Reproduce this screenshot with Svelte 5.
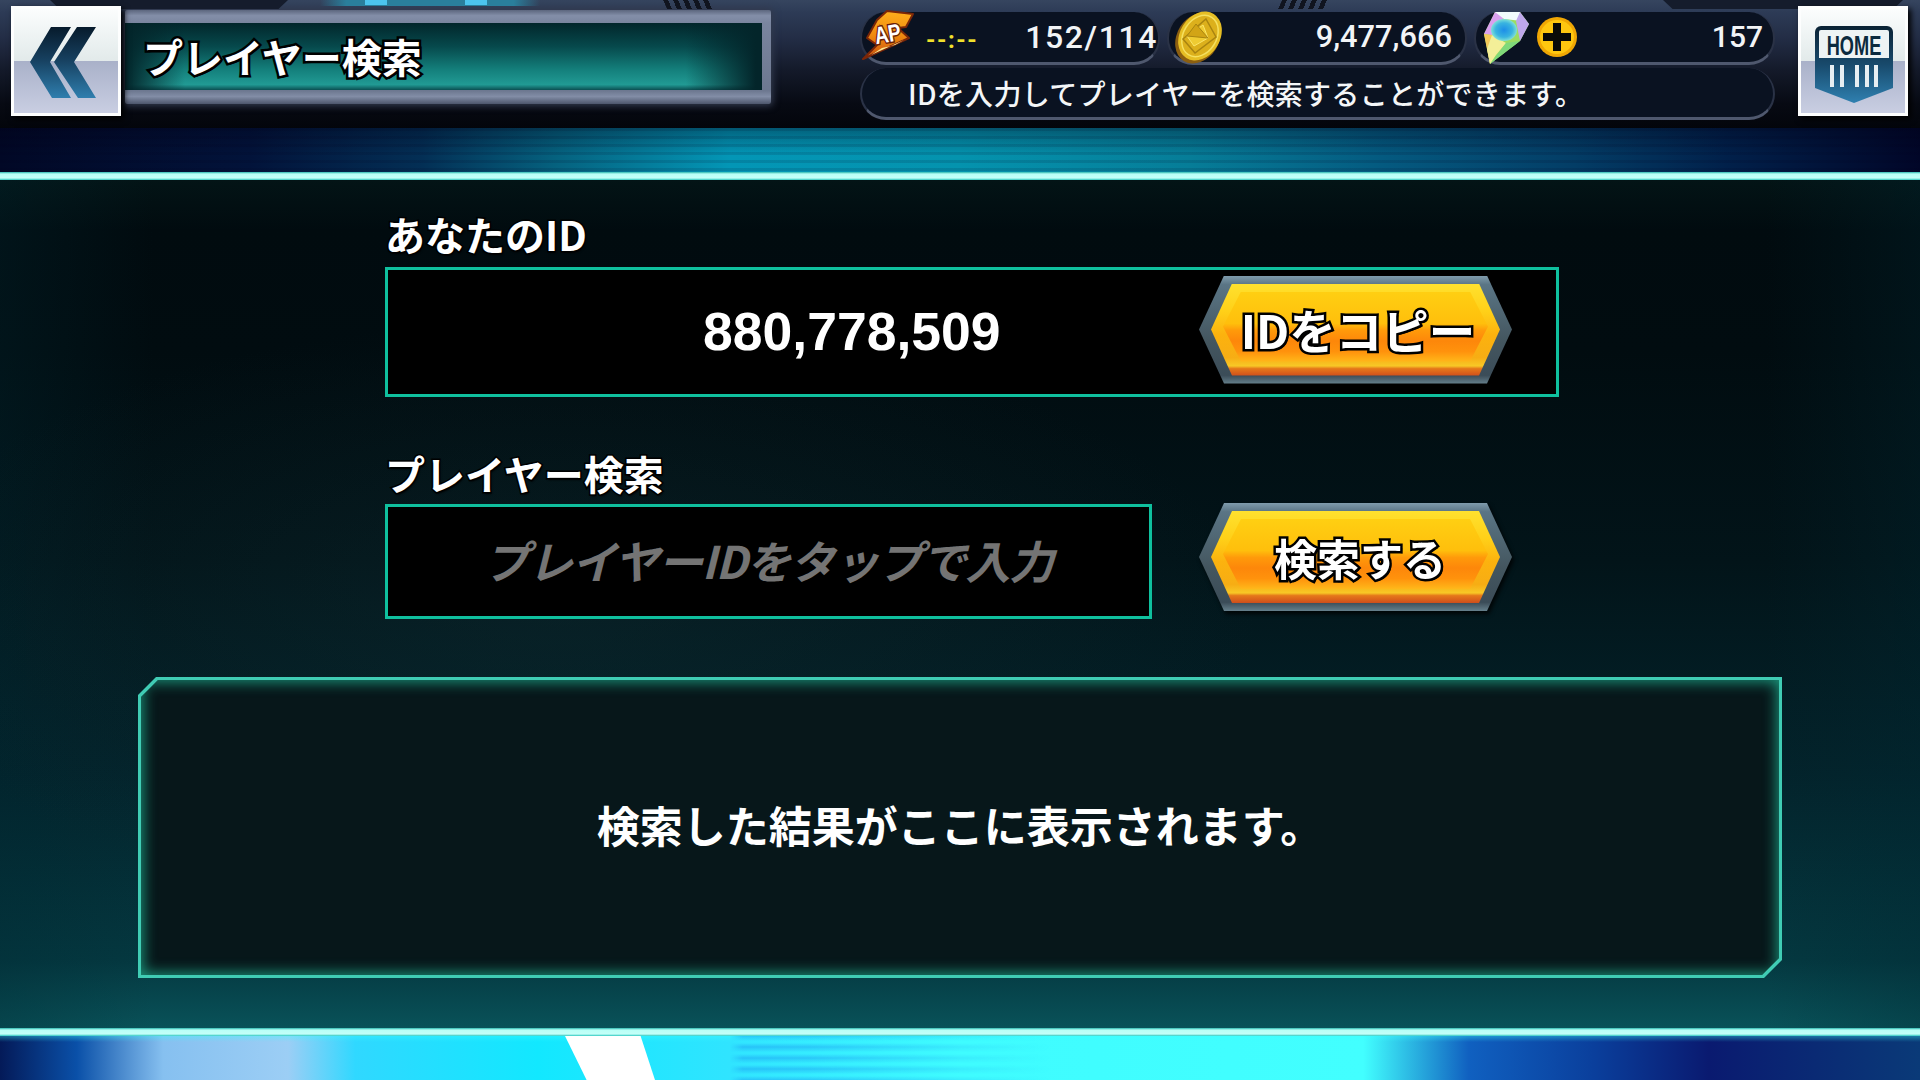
<script>
	const copyLabel = 'IDをコピー';
	const searchLabel = '検索する';
</script>

<div class="screen">
	<header class="header">
		<span class="deco tab-left"></span>
		<span class="deco lights"><i></i><i></i></span>
		<span class="deco stripes s1"></span>
		<span class="deco stripes s2"></span>
		<span class="deco tab-right"></span>

		<button class="square">
			<svg viewBox="0 0 104 104" width="104" height="104">
				<defs>
					<linearGradient id="chev" x1="0" y1="0" x2="0" y2="1">
						<stop offset="0" stop-color="#071b2c" />
						<stop offset="0.45" stop-color="#163f5e" />
						<stop offset="1" stop-color="#2f7eae" />
					</linearGradient>
				</defs>
				<path d="M16 53 37 18h20L36 53l21 36H38Z" fill="url(#chev)" />
				<path d="M40 53 63 18h19L60 53l22 36H64Z" fill="url(#chev)" />
			</svg>
		</button>

		<div class="title-bar">
			<div class="title-inner">
				<h1 class="outlined">プレイヤー検索</h1>
			</div>
		</div>

		<div class="stats">
			<div class="pill ap">
				<svg viewBox="0 0 54 54" width="54" height="54">
					<defs>
						<linearGradient id="bolt" x1="0" y1="0" x2="0" y2="1">
							<stop offset="0" stop-color="#ffb01c" />
							<stop offset="0.5" stop-color="#f08a10" />
							<stop offset="1" stop-color="#c8500e" />
						</linearGradient>
					</defs>
					<path d="M25 3 51 6 44 19 36 20 47 30 1 51 15 37 5 30 15 12Z" fill="url(#bolt)" stroke="#7a2608" stroke-width="2" stroke-linejoin="round" />
					<path d="M33 37 42 32 9 47 20 40Z" fill="#ffe98f" />
					<text class="ap-text" transform="translate(27 34) rotate(-10) scale(0.8 1)">AP</text>
				</svg>
				<span class="time">--:--</span>
				<span class="num">152/114</span>
			</div>
			<div class="pill coin">
				<svg viewBox="0 0 54 54" width="54" height="54">
					<ellipse cx="26" cy="28" rx="21" ry="27" transform="rotate(32 26 28)" fill="#8c5f10" />
					<ellipse cx="28" cy="26" rx="20" ry="26" transform="rotate(32 28 26)" fill="#e6be24" />
					<ellipse cx="28" cy="26" rx="16.5" ry="22" transform="rotate(32 28 26)" fill="#dcb01c" stroke="#f5e060" stroke-width="1.5" />
					<path d="M34 9 44 27 23 43 11 29Z" fill="none" stroke="#a98410" stroke-width="1.5" />
					<path d="M31 15 36 28 22 36 15 26Z" fill="#efcb32" stroke="#fbe66a" />
					<path d="M24 14 36 28 15 26Z" fill="#d2a416" stroke="#a98410" />
				</svg>
				<span class="num">9,477,666</span>
			</div>
			<div class="pill gem">
				<svg class="gem-icon" viewBox="0 0 48 54" width="48" height="54">
					<defs>
						<radialGradient id="gem-core">
							<stop offset="0" stop-color="#1d8ee8" />
							<stop offset="0.65" stop-color="#39b4e0" />
							<stop offset="1" stop-color="#7fe0d8" />
						</radialGradient>
					</defs>
					<path d="M13 1 38 1 47 13 38 30 8 53 2 23Z" fill="#9bdc62" />
					<path d="M2 23 13 1 22 6 10 24Z" fill="#d9a0ee" />
					<path d="M13 1 38 1 40 10 22 8Z" fill="#f1fbfd" />
					<path d="M38 1 47 13 38 30 34 10Z" fill="#bfa8ec" />
					<path d="M2 23 10 24 14 38 8 53Z" fill="#f4c95a" />
					<path d="M10 24 24 32 14 44 8 53 5 38Z" fill="#f3ef98" />
					<path d="M24 32 38 30 8 53Z" fill="#7fd97a" />
					<ellipse cx="22" cy="19" rx="13" ry="11" fill="url(#gem-core)" />
				</svg>
				<svg class="plus" viewBox="0 0 40 40" width="40" height="40">
					<circle cx="20" cy="20" r="20" fill="#f0a704" />
					<circle cx="20" cy="20" r="17" fill="#ffc70f" />
					<path d="M16 6h8v10h10v8H24v10h-8V24H6v-8h10Z" fill="#0b0b08" />
				</svg>
				<span class="num">157</span>
			</div>
			<div class="pill message">IDを入力してプレイヤーを検索することができます。</div>
		</div>

		<button class="square home">
			<svg viewBox="0 0 104 104" width="104" height="104">
				<defs>
					<linearGradient id="shield" x1="0" y1="0" x2="0" y2="1">
						<stop offset="0" stop-color="#0a2234" />
						<stop offset="0.5" stop-color="#184a6c" />
						<stop offset="1" stop-color="#2f80b0" />
					</linearGradient>
				</defs>
				<path d="M20 17h66a6 6 0 0 1 6 6v56L53 94 14 79V23a6 6 0 0 1 6-6Z" fill="url(#shield)" />
				<path d="M20 21h66a2 2 0 0 1 2 2v26H18V23a2 2 0 0 1 2-2Z" fill="#eef3f4" />
				<text class="home-text" transform="translate(53 46) scale(0.65 1)">HOME</text>
				<path d="M29 56h4v22h-4Zm10 0h4v22h-4Zm15 0h4v22h-4Zm10 0h4v22h-4Zm9 0h4v22h-4Z" fill="#e6eef2" />
			</svg>
		</button>
	</header>

	<div class="band top"></div>
	<div class="line"></div>

	<main class="main">
		<section class="form">
			<h2 class="label outlined-thin">あなたのID</h2>
			<div class="box id-box">
				<span class="player-id">880,778,509</span>
				<div class="hex-wrap">
					<button class="hex copy">
						<span class="hex-inner"><span class="outlined">{copyLabel}</span></span>
					</button>
				</div>
			</div>

			<h2 class="label second outlined-thin">プレイヤー検索</h2>
			<div class="search-row">
				<div class="box search-box">プレイヤーIDをタップで入力</div>
				<div class="hex-wrap search-wrap">
					<button class="hex">
						<span class="hex-inner"><span class="outlined">{searchLabel}</span></span>
					</button>
				</div>
			</div>
		</section>

		<div class="panel">
			<div class="panel-inner">
				<p>検索した結果がここに表示されます。</p>
			</div>
		</div>
	</main>

	<div class="line"></div>
	<div class="band bottom"><span class="streak"></span></div>
</div>

<style>
	:global(body) {
		margin: 0;
		background: #000;
	}

	.screen {
		width: 1920px;
		height: 1080px;
		display: flex;
		flex-direction: column;
		overflow: hidden;
		font-family: "Noto Sans CJK JP", "Liberation Sans", sans-serif;
		color: #fff;
	}

	/* header */
	.header {
		position: relative;
		height: 128px;
		flex: none;
		display: flex;
		align-items: flex-start;
		padding: 6px 12px 0 11px;
		box-sizing: border-box;
		background: linear-gradient(#36455f 0, #2d3b56 12px, #222c44 40px, #141a2a 70px, #070a13 104px, #03050b 128px);
	}

	.deco {
		position: absolute;
		top: 0;
	}

	.tab-left,
	.tab-right {
		height: 9px;
		background: #151c2c;
		clip-path: polygon(0 0, 100% 0, 96% 100%, 4% 100%);
	}

	.tab-left {
		left: 50px;
		width: 238px;
	}

	.tab-right {
		left: 1663px;
		width: 240px;
	}

	.lights {
		left: 320px;
		width: 220px;
		height: 6px;
		background: linear-gradient(90deg, transparent, #2a7f9c 12%, #2a7f9c 88%, transparent);
	}

	.lights i {
		position: absolute;
		top: 0;
		left: 45px;
		width: 22px;
		height: 5px;
		background: #4cc4ee;
	}

	.lights i + i {
		left: 145px;
	}

	.stripes {
		width: 46px;
		height: 9px;
		background: repeating-linear-gradient(90deg, #10141f 0 5px, transparent 5px 10px);
		transform: skewX(-25deg);
	}

	.s1 { left: 665px; transform: skewX(25deg); }
	.s2 { left: 1280px; }

	.square {
		position: relative;
		flex: none;
		width: 110px;
		height: 110px;
		padding: 0;
		border: 3px solid #fdfefe;
		box-sizing: border-box;
		background: linear-gradient(#fbfdfd 0, #e2eaea 50%, #a9b1c9 50%, #c9cee2 100%);
		box-shadow: 3px 3px 6px #000;
	}

	.square svg {
		display: block;
	}

	.title-bar {
		width: 646px;
		height: 94px;
		margin: 4px 4px 0 4px;
		flex: none;
		box-sizing: border-box;
		padding: 13px 9px 14px 0;
		background: linear-gradient(#5c667e 0, #838ea8 6%, #7a859f 14%, #6d7890 86%, #828da6 92%, #4d566c 100%);
		box-shadow: 0 0 7px 2px #323a4e;
		border-radius: 2px;
	}

	.title-inner {
		height: 100%;
		background:
			linear-gradient(90deg, #03252a 0, transparent 60px, transparent 88%, #03252a 99%),
			linear-gradient(#02262b 0, #06494c 35%, #14807c 70%, #219a94 92%, #0b4f52 100%);
	}

	h1 {
		margin: 0;
		padding-left: 18px;
		font-size: 40px;
		line-height: 66px;
		font-weight: 700;
	}

	.outlined {
		-webkit-text-stroke: 5px #000;
		paint-order: stroke fill;
		text-shadow: 2px 2px 0 #000;
	}

	.outlined-thin {
		-webkit-text-stroke: 3px #000;
		paint-order: stroke fill;
		text-shadow: 1px 2px 2px #000;
	}

	.stats {
		margin: 6px 23px 0 85px;
		width: 915px;
		flex: none;
		display: grid;
		grid-template-columns: 300px 300px 301px;
		column-gap: 7px;
		row-gap: 3px;
	}

	.pill {
		position: relative;
		height: 53px;
		box-sizing: border-box;
		display: flex;
		align-items: center;
		border-radius: 26px;
		background: #0a1221;
		border-bottom: 3px solid #4f586e;
		border-left: 2px solid #2a3246;
		border-right: 2px solid #2a3246;
		font-family: Roboto, "Liberation Sans", sans-serif;
	}

	.num {
		margin-left: auto;
		font-size: 30px;
		font-weight: 500;
		line-height: 1;
		color: #f2f4f6;
	}

	.ap .num {
		font-size: 32px;
		letter-spacing: 1.6px;
	}

	.ap svg {
		margin-top: -4px;
	}

	.ap-text {
		font-family: "Liberation Sans", sans-serif;
		font-size: 24px;
		font-weight: 700;
		fill: #fff;
		stroke: #6a1e08;
		stroke-width: 3px;
		paint-order: stroke;
		text-anchor: middle;
	}

	.time {
		margin-left: 10px;
		margin-top: 6px;
		font-size: 24px;
		font-weight: 700;
		line-height: 1;
		letter-spacing: 1.5px;
		color: #f1e02c;
	}

	.coin {
		padding: 0 13px 0 3px;
	}

	.coin .num {
		font-size: 30.8px;
	}

	.gem {
		padding: 0 10px 0 6px;
	}

	.plus {
		margin-left: 7px;
	}

	.gem-icon {
		margin-top: 2px;
	}

	.message {
		grid-column: 1 / -1;
		height: 52px;
		padding-left: 46px;
		font-family: "Noto Sans CJK JP", sans-serif;
		font-size: 28px;
		font-weight: 500;
		letter-spacing: 0.3px;
		color: #f4f6f8;
	}

	/* bands */
	.band {
		height: 44px;
		flex: none;
		position: relative;
	}

	.band.top {
		background:
			repeating-linear-gradient(rgba(0, 0, 30, 0.12) 0 3px, transparent 3px 8px),
			linear-gradient(rgba(0, 0, 20, 0.35), transparent 60%),
			linear-gradient(90deg, #010826 0, #02133a 13%, #032f55 22%, #05627f 29%, #0396b6 38%, #0493ae 50%, #067d98 62%, #045a80 72%, #033d66 82%, #01204a 90%, #010628 100%);
	}

	.band.bottom {
		background:
			linear-gradient(rgba(60, 255, 255, 0.35), transparent 6px),
			linear-gradient(90deg, #041a58 0, #0a50a8 4%, #86c0f0 8.5%, #9ccef5 15%, #30d8ff 18.5%, #12e8ff 28%, #30e4ff 38%, #3ffcff 50%, #42ffff 71%, #1060c0 76.5%, #0a3f9c 83%, #0a1a70 89%, #0a3a78 100%);
	}

	.band.bottom::after {
		content: "";
		position: absolute;
		left: 730px;
		top: 0;
		width: 320px;
		height: 100%;
		background: repeating-linear-gradient(rgba(20, 120, 235, 0.32), transparent 5px, transparent 7px, rgba(20, 120, 235, 0.32) 11px);
		-webkit-mask-image: linear-gradient(90deg, transparent, #000 4%, #000 25%, transparent);
		mask-image: linear-gradient(90deg, transparent, #000 4%, #000 25%, transparent);
	}

	.streak {
		position: absolute;
		left: 565px;
		top: 0;
		width: 90px;
		height: 100%;
		background: #fff;
		clip-path: polygon(0 0, 84% 0, 100% 100%, 24% 100%);
	}

	.line {
		height: 8px;
		flex: none;
		background: linear-gradient(#2bb8b0 0, #b8fff6 25%, #c4fff8 75%, #2fc8c0 100%);
	}

	/* main */
	.main {
		flex: 1;
		min-height: 0;
		box-sizing: border-box;
		padding-top: 34px;
		background:
			radial-gradient(700px 300px at 560px 440px, rgba(20, 50, 55, 0.3), transparent),
			linear-gradient(90deg, rgba(0, 40, 50, 0.3), transparent 8%, transparent 92%, rgba(0, 40, 50, 0.3)),
			linear-gradient(#031416 0, #010b0f 6%, #010c10 20%, #021419 45%, #03232b 70%, #043840 92%, #095259 100%);
	}

	.form {
		margin-left: 385px;
		width: 1174px;
	}

	.label {
		margin: 0 0 13px;
		font-size: 40px;
		line-height: 40px;
		font-weight: 700;
	}

	.label.second {
		margin: 56px 0 11px;
	}

	.box {
		box-sizing: border-box;
		border: 3px solid #0fc09e;
		background: #000;
	}

	.id-box {
		height: 130px;
		display: flex;
		align-items: center;
		justify-content: space-between;
		padding: 0 44px 5px 315px;
	}

	.player-id {
		font-family: "Liberation Sans", sans-serif;
		font-size: 53.5px;
		font-weight: 700;
		margin-top: 3px;
	}

	.search-row {
		display: flex;
		align-items: flex-start;
		gap: 47px;
	}

	.search-box {
		width: 767px;
		height: 115px;
		line-height: 106px;
		text-align: center;
		font-size: 45px;
		font-weight: 700;
		font-style: italic;
		color: #747474;
		letter-spacing: -1.2px;
	}

	.hex-wrap {
		flex: none;
		filter: drop-shadow(2px 3px 2px rgba(0, 0, 0, 0.8));
	}

	.search-wrap {
		margin-top: -1px;
	}

	.hex {
		display: block;
		width: 313px;
		height: 108px;
		padding: 8px 12px;
		border: none;
		box-sizing: border-box;
		font: inherit;
		color: #fff;
		background: linear-gradient(#7f9bac 0, #5a7585 8%, #44565f 60%, #3b4c58 92%, #66808c 100%);
		clip-path: polygon(0 50%, 25px 0, calc(100% - 25px) 0, 100% 50%, calc(100% - 25px) 100%, 25px 100%);
	}

	.hex-inner {
		position: relative;
		display: flex;
		align-items: center;
		justify-content: center;
		width: 100%;
		height: 100%;
		font-size: 43px;
		font-weight: 700;
		line-height: 1;
		background: linear-gradient(#ffe12e 0, #ffd018 30%, #fcb20e 55%, #f7ad14 80%, #f8c826 89%, #e5781a 92%, #cf4e1c 100%);
		clip-path: polygon(0 50%, 21px 0, calc(100% - 21px) 0, 100% 50%, calc(100% - 21px) 100%, 21px 100%);
	}

	.hex-inner::before {
		content: "";
		position: absolute;
		inset: 8px 12px 14px;
		background: linear-gradient(#ffcf12 0, #ffbf0c 45%, #ff9a0a 55%, #fd870a 70%, #ff920c 85%, #ffb81a 100%);
		clip-path: polygon(0 50%, 18px 0, calc(100% - 18px) 0, 100% 50%, calc(100% - 18px) 100%, 18px 100%);
	}

	.hex-inner > span {
		position: relative;
		margin-left: 9px;
	}

	.copy .hex-inner {
		font-size: 46.5px;
	}

	.copy .hex-inner > span {
		margin-left: 5px;
	}

	.panel {
		width: 1644px;
		height: 301px;
		margin: 58px 0 0 138px;
		padding: 3px;
		box-sizing: border-box;
		background: #40ccb4;
		clip-path: polygon(18px 0, 100% 0, 100% calc(100% - 18px), calc(100% - 18px) 100%, 0 100%, 0 18px);
	}

	.panel-inner {
		height: 100%;
		display: flex;
		align-items: center;
		justify-content: center;
		background: #07171a;
		box-shadow: inset 0 0 14px 2px rgba(30, 170, 140, 0.85);
		clip-path: polygon(17px 0, 100% 0, 100% calc(100% - 17px), calc(100% - 17px) 100%, 0 100%, 0 17px);
	}

	.panel-inner p {
		margin: -8px 0 0;
		font-size: 43px;
		font-weight: 700;
		color: #fff;
	}

	.home-text {
		font-family: "Liberation Sans", sans-serif;
		font-size: 28px;
		font-weight: 700;
		fill: #0c2a3e;
		text-anchor: middle;
	}
</style>
